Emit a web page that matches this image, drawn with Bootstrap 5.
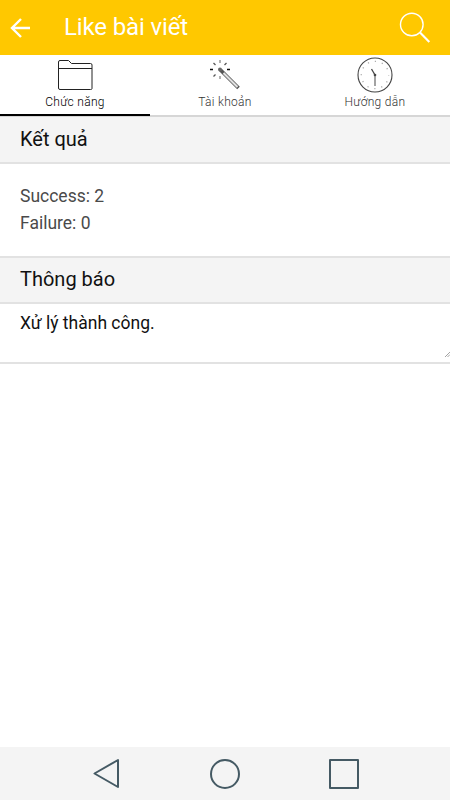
<!DOCTYPE html>
<html lang="vi">
<head>
<meta charset="utf-8">
<meta name="viewport" content="width=device-width, initial-scale=1">
<title>Like bài viết</title>
<link href="https://cdn.jsdelivr.net/npm/bootstrap@5.3.0/dist/css/bootstrap.min.css" rel="stylesheet">
<style>
body { font-family: Roboto, "Noto Sans", sans-serif; color: #111; height: 800px; overflow: hidden; }
svg { display: block; }
.app-bar { height: 55px; background: #ffc800; padding: 0 18px 0 10px; }
.app-title { font-size: 24px; line-height: 28px; margin: -2px 0 0 33px; letter-spacing: -.13px; }
.tab-strip { height: 62px; border-bottom: 2px solid #d6d6d6; }
.tab-item { height: 61px; padding-top: 1px; color: #333; font-size: 12px; font-weight: 300; line-height: 16px; border-bottom: 2px solid transparent; letter-spacing: .3px; }
.tab-item.current { color: #000; border-color: #000; margin-bottom: -1px; }
.section-head { height: 47px; padding: 0 20px; background: #f4f4f4; border-bottom: 2px solid #e2e2e2; font-size: 20px; line-height: 45px; }
.section-head.compact { height: 46px; line-height: 43px; }
.result-box { height: 94px; padding: 19px 20px 0; font-size: 17.5px; line-height: 27.4px; color: #4a4a4a; border-bottom: 2px solid #e2e2e2; }
.notice-box { height: 60px; padding: 5px 0 0 20px; font-size: 17.5px; line-height: 28px; border-bottom: 2px solid #e2e2e2; }
.system-bar { height: 53px; background: #f4f4f4; }
</style>
<script src="https://cdn.jsdelivr.net/npm/bootstrap@5.3.0/dist/js/bootstrap.bundle.min.js"></script>
</head>
<body class="d-flex flex-column bg-white m-0">
<header class="app-bar d-flex align-items-center text-white flex-shrink-0">
  <svg width="21" height="22" viewBox="0 0 21 22" fill="none" stroke="#fff" stroke-width="2.4"><path d="M20 11H2M11 2L2 11l9 9"/></svg>
  <h1 class="app-title fw-normal">Like bài viết</h1>
  <svg class="ms-auto" width="34" height="34" viewBox="0 0 34 34" fill="none" stroke="#fff"><circle cx="13.8" cy="13.5" r="11.3" stroke-width="1.4"/><path d="M22 21.500l9.300 9.500" stroke-width="2.1"/></svg>
</header>
<nav class="tab-strip d-flex flex-shrink-0">
  <div class="tab-item current col-4 d-flex flex-column align-items-center">
    <svg width="38" height="38" viewBox="0 0 38 38" fill="none" stroke="#222"><path d="M2.500 32V6Q2.500 4.500 4 4.500H12.500L15.500 7.500H34.500Q36 7.500 36 9V32.500Q36 33.500 34.500 33.500H4Q2.500 33.500 2.500 32M2.500 12.500H36" stroke-width="1"/></svg>
    <span>Chức năng</span>
  </div>
  <div class="tab-item col-4 d-flex flex-column align-items-center">
    <svg width="38" height="38" viewBox="0 0 38 38" fill="none" stroke="#555"><path d="M14.500 14L32.500 32" stroke-width="3.800" stroke="#555"/><path d="M17.500 17L31.500 31" stroke-width="2" stroke="#fff"/><path d="M17.500 17L31.500 31" stroke-width=".6" stroke="#999"/><circle cx="14" cy="13.500" r="2" fill="#666" stroke="none"/><path d="M4 13.500h3M21 13.500h3" stroke="#111" stroke-width="1.300"/><path d="M14 4v3M14 20v3" stroke="#aaa" stroke-width="1.800"/><path d="M7.500 7l2 2M20.500 7l-2 2M7.500 20.500l2-2" stroke-width="1.300"/></svg>
    <span>Tài khoản</span>
  </div>
  <div class="tab-item col-4 d-flex flex-column align-items-center">
    <svg width="38" height="38" viewBox="0 0 38 38" fill="none" stroke="#444"><circle cx="19" cy="19" r="17" stroke-width="1.100"/><circle cx="19" cy="19" r="13.700" stroke="#aaa" stroke-width="1.300" stroke-dasharray="1.200 5.973" stroke-dashoffset=".6"/><path d="M15.500 13l3.500 6" stroke-width="1.300"/><path d="M19 19v11" stroke="#999" stroke-width="1.800"/><circle cx="19" cy="19" r="1.300" fill="#444" stroke="none"/></svg>
    <span>Hướng dẫn</span>
  </div>
</nav>
<main class="flex-grow-1">
  <h2 class="section-head fw-normal mb-0">Kết quả</h2>
  <div class="result-box"><div>Success: 2</div><div>Failure: 0</div></div>
  <h2 class="section-head compact fw-normal mb-0">Thông báo</h2>
  <div class="notice-box d-flex justify-content-between">
    <span>Xử lý thành công.</span>
    <svg class="align-self-end mb-1" width="6" height="7" viewBox="0 0 6 7" stroke="#999" stroke-width=".9"><path d="M1 6l5-5M3.500 6l2.500-2.500"/></svg>
  </div>
</main>
<footer class="system-bar flex-shrink-0">
  <svg width="450" height="53" viewBox="0 0 450 53" fill="none" stroke="#455a64" stroke-width="2"><path d="M94.500 26.500L118 13v27zM330 13h28v28h-28z" stroke-linejoin="round"/><circle cx="225" cy="27" r="14"/></svg>
</footer>
</body>
</html>
